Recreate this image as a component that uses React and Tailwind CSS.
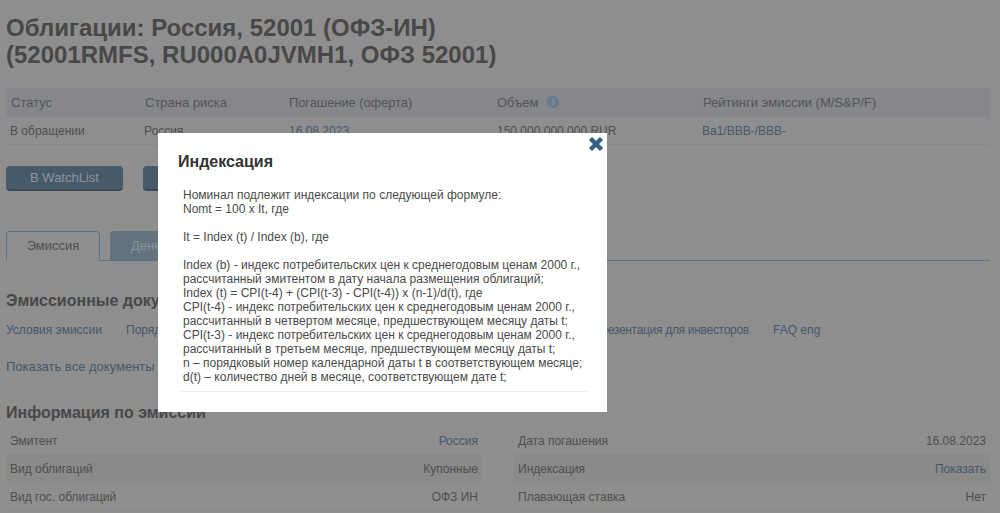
const infoLeft = [
  { label: "Эмитент", value: "Россия", link: true },
  { label: "Вид облигаций", value: "Купонные" },
  { label: "Вид гос. облигаций", value: "ОФЗ ИН" },
];

const infoRight = [
  { label: "Дата погашения", value: "16.08.2023" },
  { label: "Индексация", value: "Показать", link: true },
  { label: "Плавающая ставка", value: "Нет" },
];

const modalLines = [
  "Номинал подлежит индексации по следующей формуле:",
  "Nomt = 100 x It, где",
  "",
  "It = Index (t) / Index (b), где",
  "",
  "Index (b) - индекс потребительских цен к среднегодовым ценам 2000 г.,",
  "рассчитанный эмитентом в дату начала размещения облигаций;",
  "Index (t) = CPI(t-4) + (CPI(t-3) - CPI(t-4)) x (n-1)/d(t), где",
  "CPI(t-4) - индекс потребительских цен к среднегодовым ценам 2000 г.,",
  "рассчитанный в четвертом месяце, предшествующем месяцу даты t;",
  "CPI(t-3) - индекс потребительских цен к среднегодовым ценам 2000 г.,",
  "рассчитанный в третьем месяце, предшествующем месяцу даты t;",
  "n – порядковый номер календарной даты t в соответствующем месяце;",
  "d(t) – количество дней в месяце, соответствующем дате t;",
];

function InfoColumn({ rows }) {
  return (
    <div className="w-[476px]">
      {rows.map((row, index) => (
        <div
          key={row.label}
          className={`flex h-7 items-center justify-between px-1 border-b border-[#888888] ${
            index % 2 === 1 ? "bg-[#8a8a8a]" : ""
          }`}
        >
          <span>{row.label}</span>
          <span className={row.link ? "text-[#45596c]" : ""}>{row.value}</span>
        </div>
      ))}
    </div>
  );
}

export default function App() {
  return (
    <div className="relative h-[513px] overflow-hidden bg-[#8e8e8e] px-1.5 font-['Liberation_Sans',Arial,sans-serif] text-xs text-[#4f4f4f]">
      <h1 className="pt-[14px] text-2xl leading-[27px] font-bold text-[#484848]">
        Облигации: Россия, 52001 (ОФЗ-ИН)
        <br />
        (52001RMFS, RU000A0JVMH1, ОФЗ 52001)
      </h1>

      {/* Summary table */}
      <div className="mt-[20px] w-[984px]">
        <div className="flex h-[29px] items-center bg-[#85878a] text-[13px] text-[#555555]">
          <span className="w-[139px] pl-[5px]">Статус</span>
          <span className="w-[144px]">Страна риска</span>
          <span className="w-[208px] tracking-[-0.1px]">Погашение (оферта)</span>
          <span className="flex w-[206px] items-center gap-[9px]">
            Объем
            <span className="flex size-3 items-center justify-center rounded-full bg-[#657c8b] text-[10px] font-bold text-[#8e8e8e]">
              i
            </span>
          </span>
          <span>Рейтинги эмиссии (M/S&amp;P/F)</span>
        </div>
        <div className="flex h-7 items-center border-b border-[#888888]">
          <span className="w-[138px] pl-1">В обращении</span>
          <span className="w-[145px]">Россия</span>
          <span className="w-[208px] text-[#45596c]">16.08.2023</span>
          <span className="w-[205px]">150 000 000 000 RUR</span>
          <span className="text-[#45596c]">Ba1/BBB-/BBB-</span>
        </div>
      </div>

      {/* Buttons */}
      <div className="mt-[21px] flex gap-5">
        <button className="h-[25px] w-[117px] rounded-sm border-b-2 border-[#3b4a57] bg-[#475a69] text-[13px] text-[#8d959b]">
          В WatchList
        </button>
        <button className="h-[25px] w-[117px] rounded-sm border-b-2 border-[#3b4a57] bg-[#475a69]" />
      </div>

      {/* Tabs */}
      <div className="mt-10 flex h-[30px] w-[984px] gap-2.5 border-b border-[#5d7382]">
        <div className="flex h-[30px] w-[94px] items-center justify-center rounded-t-sm border border-[#5d7382] border-b-[#8e8e8e] text-[13px] text-[#505050]">
          Эмиссия
        </div>
        <div className="flex h-[29px] w-[120px] items-center rounded-t-sm bg-[#63747f] pl-[21px] text-[13px] text-[#8a9299]">
          Денежные
        </div>
      </div>

      <h2 className="mt-[30px] text-base leading-5 font-bold text-[#484848]">Эмиссионные документы</h2>
      <div className="mt-[11px] flex h-4 items-center text-[#45596c]">
        <span className="w-[120px]">Условия эмиссии</span>
        <span className="w-[467px]">Порядок размещения</span>
        <span className="w-[180px] tracking-[-0.3px]">Презентация для инвесторов</span>
        <span>FAQ eng</span>
      </div>
      <div className="mt-[21px] text-[13px] leading-4 text-[#45596c]">Показать все документы</div>

      <h2 className="mt-[28px] text-base leading-5 font-bold text-[#484848]">Информация по эмиссии</h2>
      <div className="mt-1 flex w-[984px] justify-between">
        <InfoColumn rows={infoLeft} />
        <InfoColumn rows={infoRight} />
      </div>

      {/* Modal */}
      <div className="absolute top-[133px] left-[158px] h-[279px] w-[449px] bg-white px-5 text-[#333]">
        <button className="absolute top-[3px] right-[3px] text-[#34607f]">
          <svg width="16" height="16" viewBox="0 0 16 16" className="block">
            <path d="M2.500 2.500 13.500 13.500M13.500 2.500 2.500 13.500" stroke="currentColor" strokeWidth="4.500" fill="none" />
          </svg>
        </button>
        <h3 className="pt-[19px] text-base leading-[19px] font-bold">Индексация</h3>
        <div className="mt-[17px] border-b border-[#eeeeee] px-[5px] pb-[7px] text-xs leading-[14px] text-[#4a4a4a]">
          {modalLines.map((line, index) => (
            <div key={index} className="h-[14px] whitespace-nowrap">
              {line}
            </div>
          ))}
        </div>
      </div>
    </div>
  );
}
